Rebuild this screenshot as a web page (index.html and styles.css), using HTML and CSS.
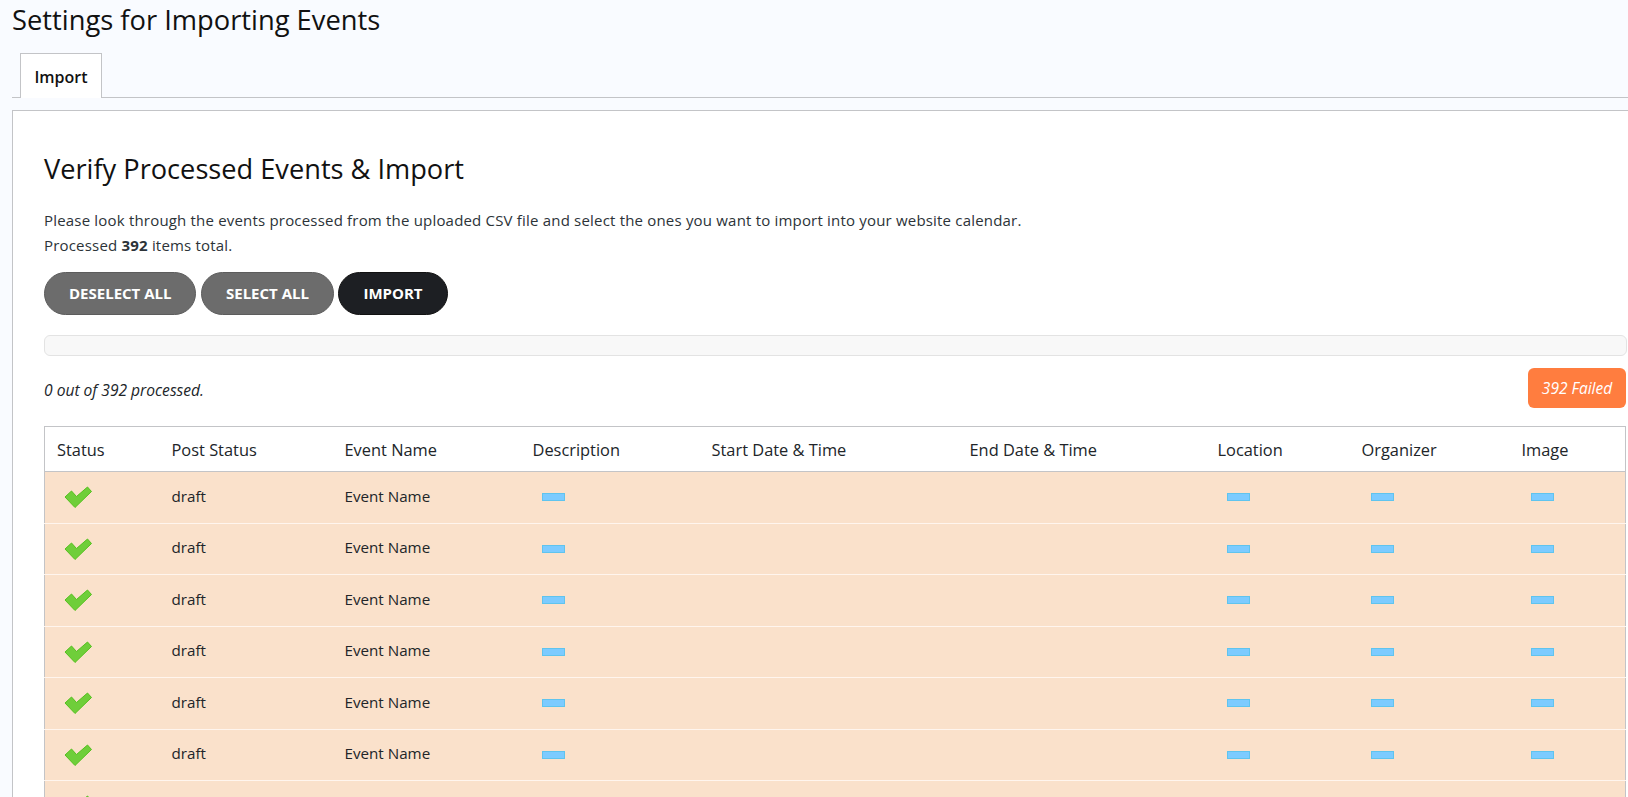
FILE: index.html
```html
<html>
	<head>
		<link rel="stylesheet" href="styles.css">
	</head>
	<body>
		<h1 class="page-title">Settings for Importing Events</h1>
		<div class="tabs">
			<a class="tab">Import</a>
		</div>
		<div class="panel">
			<h2 class="panel__title">Verify Processed Events &amp; Import</h2>
			<p class="panel__text">Please look through the events processed from the uploaded CSV file and select the ones you want to import into your website calendar.<br>Processed <strong>392</strong> items total.</p>
			<div class="actions">
				<button type="button" class="action-button">Deselect All</button>
				<button type="button" class="action-button">Select All</button>
				<button type="button" class="action-button action-button--dark">Import</button>
			</div>
			<div class="progress"></div>
			<div class="progress-info">
				<em class="progress-info__text">0 out of 392 processed.</em>
				<span class="failed-badge">392 Failed</span>
			</div>
			<table class="events">
				<colgroup>
					<col class="col-status"><col class="col-post"><col class="col-name"><col class="col-desc"><col class="col-start"><col class="col-end"><col class="col-location"><col class="col-organizer"><col class="col-image">
				</colgroup>
				<thead>
					<tr>
						<th>Status</th><th>Post Status</th><th>Event Name</th><th>Description</th><th>Start Date &amp; Time</th><th>End Date &amp; Time</th><th>Location</th><th>Organizer</th><th>Image</th>
					</tr>
				</thead>
				<tbody>
					<tr><td><svg class="check" viewBox="0 0 28 22"><path d="M1 11 7.500 5 12.500 10.500 23.500 1 27.500 5.500 11 21.500z"/></svg></td><td class="cell-text">draft</td><td class="cell-text">Event Name</td><td><i class="dash"></i></td><td></td><td></td><td><i class="dash"></i></td><td><i class="dash"></i></td><td><i class="dash"></i></td></tr>
					<tr><td><svg class="check" viewBox="0 0 28 22"><path d="M1 11 7.500 5 12.500 10.500 23.500 1 27.500 5.500 11 21.500z"/></svg></td><td class="cell-text">draft</td><td class="cell-text">Event Name</td><td><i class="dash"></i></td><td></td><td></td><td><i class="dash"></i></td><td><i class="dash"></i></td><td><i class="dash"></i></td></tr>
					<tr><td><svg class="check" viewBox="0 0 28 22"><path d="M1 11 7.500 5 12.500 10.500 23.500 1 27.500 5.500 11 21.500z"/></svg></td><td class="cell-text">draft</td><td class="cell-text">Event Name</td><td><i class="dash"></i></td><td></td><td></td><td><i class="dash"></i></td><td><i class="dash"></i></td><td><i class="dash"></i></td></tr>
					<tr><td><svg class="check" viewBox="0 0 28 22"><path d="M1 11 7.500 5 12.500 10.500 23.500 1 27.500 5.500 11 21.500z"/></svg></td><td class="cell-text">draft</td><td class="cell-text">Event Name</td><td><i class="dash"></i></td><td></td><td></td><td><i class="dash"></i></td><td><i class="dash"></i></td><td><i class="dash"></i></td></tr>
					<tr><td><svg class="check" viewBox="0 0 28 22"><path d="M1 11 7.500 5 12.500 10.500 23.500 1 27.500 5.500 11 21.500z"/></svg></td><td class="cell-text">draft</td><td class="cell-text">Event Name</td><td><i class="dash"></i></td><td></td><td></td><td><i class="dash"></i></td><td><i class="dash"></i></td><td><i class="dash"></i></td></tr>
					<tr><td><svg class="check" viewBox="0 0 28 22"><path d="M1 11 7.500 5 12.500 10.500 23.500 1 27.500 5.500 11 21.500z"/></svg></td><td class="cell-text">draft</td><td class="cell-text">Event Name</td><td><i class="dash"></i></td><td></td><td></td><td><i class="dash"></i></td><td><i class="dash"></i></td><td><i class="dash"></i></td></tr>
					<tr><td><svg class="check" viewBox="0 0 28 22"><path d="M1 11 7.500 5 12.500 10.500 23.500 1 27.500 5.500 11 21.500z"/></svg></td><td></td><td></td><td></td><td></td><td></td><td></td><td></td><td></td></tr>
				</tbody>
			</table>
		</div>
	</body>
</html>
```
FILE: styles.css
```css
html {
	overflow: hidden;
}
body {
	margin: 0;
	background: #f9fbff;
	font-family: "Open Sans", sans-serif;
	font-size: 15px;
	color: #212529;
}
.page-title {
	margin: 0;
	padding: 2px 0 0 12px;
	height: 53px;
	box-sizing: border-box;
	font-size: 27.300px;
	line-height: 36px;
	font-weight: 400;
	color: #111;
}
.tabs {
	margin-left: 12px;
	padding-left: 8px;
	height: 45px;
	box-sizing: border-box;
	border-bottom: 1px solid #c3c4c7;
}
.tab {
	display: block;
	width: 82px;
	height: 45px;
	box-sizing: border-box;
	border: 1px solid #c3c4c7;
	border-bottom: 0;
	background: #fff;
	text-align: center;
	font-size: 16px;
	font-weight: 600;
	line-height: 46px;
	color: #111;
}
.panel {
	margin: 12px 0 0 12px;
	padding: 40px 1px 0 31px;
	border-top: 1px solid #c3c4c7;
	border-left: 1px solid #c3c4c7;
	background: #fff;
}
.panel__title {
	margin: 0;
	font-size: 27.200px;
	line-height: 36px;
	font-weight: 400;
	color: #111;
}
.panel__text {
	margin: 21px 0 0;
	line-height: 25px;
	letter-spacing: .190px;
	color: #2c3338;
}
.actions {
	display: flex;
	gap: 4.500px;
	margin-top: 14px;
}
.action-button {
	height: 43px;
	padding: 0 24px 2px;
	border: 1px solid #5c5c5c;
	border-radius: 22px;
	background: #6c6c6c;
	font-family: "Open Sans", sans-serif;
	font-size: 15px;
	font-weight: 700;
	text-transform: uppercase;
	color: #fff;
}
.action-button--dark {
	background: #1d1f23;
	border-color: #111;
}
.progress {
	margin-top: 20px;
	height: 21px;
	box-sizing: border-box;
	border: 1px solid #e3e3e3;
	border-radius: 6px;
	background: #f8f8f8;
}
.progress-info {
	display: flex;
	justify-content: space-between;
	align-items: center;
	margin-top: 12px;
	padding-right: 1px;
}
.progress-info__text {
	padding-top: 4px;
	font-size: 15.600px;
}
.failed-badge {
	width: 98px;
	height: 40px;
	border-radius: 6px;
	background: #ff7d3f;
	font-size: 15.500px;
	font-style: italic;
	line-height: 40px;
	text-align: center;
	color: #fff;
}
.events {
	margin-top: 18px;
	width: 1581px;
	table-layout: fixed;
	border-collapse: collapse;
	border: 1px solid #c3c4c7;
}
.col-status { width: 115px; }
.col-post { width: 173px; }
.col-name { width: 188px; }
.col-desc { width: 179px; }
.col-start { width: 258px; }
.col-end { width: 248px; }
.col-location { width: 144px; }
.col-organizer { width: 160px; }
.col-image { width: 116px; }
.events th {
	height: 45px;
	padding: 0 12px;
	border-bottom: 1px solid #c3c4c7;
	background: #fff;
	text-align: left;
	font-size: 16.400px;
	font-weight: 400;
	color: #212529;
}
.events td {
	height: 51.500px;
	padding: 0 12px;
	box-sizing: border-box;
	border-bottom: 1px solid #fff5ee;
	background: #fae1cb;
	font-size: 15.200px;
}
.events td.cell-text {
	padding-bottom: 3px;
}
.check {
	display: block;
	margin-left: 7px;
	width: 28px;
	height: 22px;
	fill: #6fce3a;
	stroke: #54c01f;
	stroke-width: 1;
}
.dash {
	display: block;
	margin-left: 9px;
	width: 23px;
	height: 8px;
	box-sizing: border-box;
	border: 1px solid #5fc4ee;
	background: #7ccbff;
}
```
